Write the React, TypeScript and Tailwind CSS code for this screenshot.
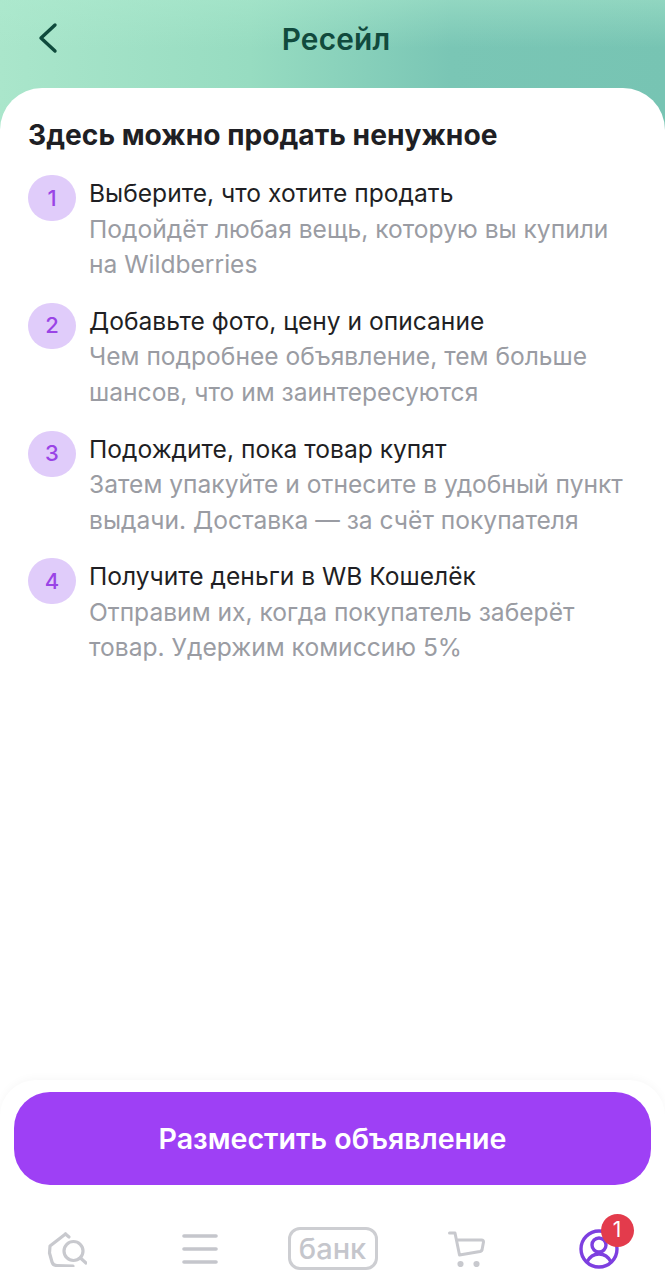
import React from "react";

const steps = [
  { n: "1", t: "Выберите, что хотите продать", d: ["Подойдёт любая вещь, которую вы купили", "на Wildberries"] },
  { n: "2", t: "Добавьте фото, цену и описание", d: ["Чем подробнее объявление, тем больше", "шансов, что им заинтересуются"] },
  { n: "3", t: "Подождите, пока товар купят", d: ["Затем упакуйте и отнесите в удобный пункт", "выдачи. Доставка — за счёт покупателя"] },
  { n: "4", t: "Получите деньги в WB Кошелёк", d: ["Отправим их, когда покупатель заберёт", "товар. Удержим комиссию 5%"] },
];

export default function App() {
  return (
    <div className="w-[665px] h-[1280px] overflow-hidden flex flex-col bg-[linear-gradient(180deg,rgba(175,235,208,0.45)_0px,rgba(175,235,208,0)_48px),linear-gradient(90deg,#aae6cb_0px,#97dcc1_250px,#7ac6b5_450px,#77c4b3_665px)] font-['Inter','Liberation_Sans',sans-serif]">
      <header className="h-[88px] shrink-0 relative flex items-center justify-center pb-[10px] pl-[7px]">
        <svg className="absolute left-[36px] top-[20px]" width="24" height="36" viewBox="0 0 24 36" fill="none">
          <path d="M19 5 L5 18 L19 31" stroke="#0f4a3c" strokeWidth="3.4" strokeLinecap="round" strokeLinejoin="round" />
        </svg>
        <h1 className="text-[29.8px] leading-[36px] font-semibold text-[#114a3d] tracking-[0.2px]">Ресейл</h1>
      </header>

      <main className="flex-1 bg-white rounded-t-[42px] flex flex-col min-h-0">
        <div className="flex-1 px-[28px] pt-[29px]">
          <h2 className="text-[28.2px] leading-[36px] font-bold text-[#1f1f24]">Здесь можно продать ненужное</h2>
          <ol className="mt-[23px] flex flex-col gap-[21.3px]">
            {steps.map((s) => (
              <li key={s.n} className="flex gap-[13px]">
                <div className="-mt-px w-[48px] h-[46px] shrink-0 rounded-full bg-[#e0ccfa] flex items-center justify-center text-[22px] font-medium text-[#9a44e6]">
                  {s.n}
                </div>
                <div className="text-[24.6px] leading-[35.5px] whitespace-nowrap">
                  <div className="text-[#1f1f24]">{s.t}</div>
                  {s.d.map((l) => (
                    <div key={l} className="text-[#9a9ca3]">{l}</div>
                  ))}
                </div>
              </li>
            ))}
          </ol>
        </div>

        <div className="h-[200px] shrink-0 rounded-t-[36px] shadow-[0_-2px_8px_rgba(0,0,0,0.03)] flex flex-col">
          <div className="px-[14px] pt-[12px]">
            <button className="w-full h-[93px] rounded-[36px] bg-[#9e40f5] text-white text-[28.6px] font-semibold pt-[1px]">
              Разместить объявление
            </button>
          </div>
          <nav className="flex-1 grid grid-cols-5 items-center justify-items-center pt-[32px]">
            <svg width="40" height="36" viewBox="0 0 40 36" fill="none" stroke="#c8c9ce" strokeWidth="3.2" strokeLinecap="round" strokeLinejoin="round">
              <path d="M18.5 3 L3 15 L2.5 22 L5 31 Q6 34.5 10 34.5 L26 35" />
              <path d="M18.5 3 L22 6" />
              <circle cx="26.5" cy="20" r="9.5" />
              <path d="M33.5 27 L39 32" />
            </svg>
            <svg width="36" height="30" viewBox="0 0 36 30" fill="none" stroke="#c5c6cc" strokeWidth="3.6" strokeLinecap="round">
              <path d="M2 2 H34" />
              <path d="M2 15 H34" />
              <path d="M2 28 H34" />
            </svg>
            <div className="w-[90px] h-[43px] rounded-[12px] border-[3px] border-[#cdced2] flex items-center justify-center text-[#c5c6cc] text-[29px] leading-none font-medium">
              банк
            </div>
            <svg width="38" height="36" viewBox="0 0 38 36" fill="none" stroke="#c8c9ce" strokeWidth="3" strokeLinecap="round" strokeLinejoin="round">
              <path d="M2.5 2 H8 L12.5 24 L33 20.5 Q35 20 35.2 18 L36.5 11 Q36.5 9 34.5 9 H10" />
              <circle cx="13.5" cy="33" r="1.6" fill="#c8c9ce" />
              <circle cx="29.5" cy="33" r="1.6" fill="#c8c9ce" />
            </svg>
            <div className="relative w-[40px] h-[40px]">
              <svg width="40" height="40" viewBox="0 0 40 40" fill="none" stroke="#7d3fe0" strokeWidth="3.4" strokeLinecap="round">
                <circle cx="20" cy="20" r="18" />
                <circle cx="20" cy="16" r="7" />
                <path d="M8 33 Q12 25 20 25 Q28 25 32 33" />
              </svg>
              <span className="absolute left-[22px] top-[-15px] w-[33px] h-[33px] rounded-full bg-[#e33b4c] text-white text-[21px] font-normal flex items-center justify-center">
                1
              </span>
            </div>
          </nav>
        </div>
      </main>
    </div>
  );
}
